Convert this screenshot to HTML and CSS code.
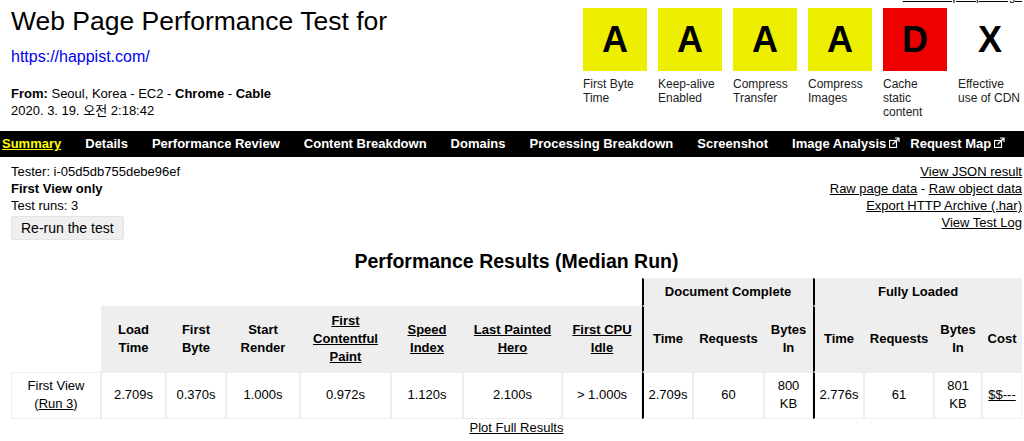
FILE: index.html
```html
<!DOCTYPE html>
<html lang="en">
<head>
<meta charset="utf-8">
<title>WebPageTest Test Result</title>
<link rel="stylesheet" href="styles.css">
</head>
<body>
<div class="header">
  <div class="head-left">
    <h1 class="title">Web Page Performance Test for</h1>
    <a class="url" href="#">https://happist.com/</a>
    <div class="meta">
      <div><b>From:</b> Seoul, Korea - EC2 - <b>Chrome</b> - <b>Cable</b></div>
      <div>2020. 3. 19. 오전 2:18:42</div>
    </div>
  </div>
  <div class="head-right">
    <div class="help"><a href="#">Need Help Improving?</a></div>
    <div class="grades">
      <div class="grade"><div class="box box-a">A</div><div class="label">First Byte Time</div></div>
      <div class="grade"><div class="box box-a">A</div><div class="label">Keep-alive Enabled</div></div>
      <div class="grade"><div class="box box-a">A</div><div class="label">Compress Transfer</div></div>
      <div class="grade"><div class="box box-a">A</div><div class="label">Compress Images</div></div>
      <div class="grade"><div class="box box-d">D</div><div class="label">Cache static content</div></div>
      <div class="grade"><div class="box box-x">X</div><div class="label">Effective use of CDN</div></div>
    </div>
  </div>
</div>

<div class="nav">
  <a class="active" href="#">Summary</a>
  <a href="#">Details</a>
  <a href="#">Performance Review</a>
  <a href="#">Content Breakdown</a>
  <a href="#">Domains</a>
  <a href="#">Processing Breakdown</a>
  <a href="#">Screenshot</a>
  <a href="#">Image Analysis<svg class="ext" viewBox="0 0 11 11" width="11" height="11"><rect x="0.5" y="3.5" width="7" height="7"/><path d="M3.5 7.5 L10 1 M6 1 H10 V5"/></svg></a>
  <a href="#">Request Map<svg class="ext" viewBox="0 0 11 11" width="11" height="11"><rect x="0.5" y="3.5" width="7" height="7"/><path d="M3.5 7.5 L10 1 M6 1 H10 V5"/></svg></a>
</div>

<div class="info">
  <div class="info-left">
    <div>Tester: i-05d5db755debe96ef</div>
    <div class="strong">First View only</div>
    <div>Test runs: 3</div>
    <button class="rerun" type="button">Re-run the test</button>
  </div>
  <div class="info-right">
    <div><a href="#">View JSON result</a></div>
    <div><a href="#">Raw page data</a> - <a href="#">Raw object data</a></div>
    <div><a href="#">Export HTTP Archive (.har)</a></div>
    <div><a href="#">View Test Log</a></div>
  </div>
</div>

<h2 class="results-title">Performance Results (Median Run)</h2>

<table class="results">
  <colgroup>
    <col class="w90"><col class="w65"><col class="w60"><col class="w74"><col class="w91"><col class="w72"><col class="w99"><col class="w80">
    <col class="w51"><col class="w71"><col class="w49">
    <col class="w51"><col class="w70"><col class="w48"><col class="w40">
  </colgroup>
  <tr class="row-group">
    <th class="blank" colspan="8"></th>
    <th class="sep" colspan="3">Document Complete</th>
    <th class="sep" colspan="4">Fully Loaded</th>
  </tr>
  <tr class="row-head">
    <th class="blank"></th>
    <th>Load Time</th>
    <th>First Byte</th>
    <th>Start Render</th>
    <th><a href="#">First Contentful Paint</a></th>
    <th><a href="#">Speed Index</a></th>
    <th><a href="#">Last Painted Hero</a></th>
    <th><a href="#">First CPU Idle</a></th>
    <th class="sep">Time</th>
    <th>Requests</th>
    <th>Bytes In</th>
    <th class="sep">Time</th>
    <th>Requests</th>
    <th>Bytes In</th>
    <th>Cost</th>
  </tr>
  <tr class="row-data">
    <td><span class="run">First View<br>(<a href="#">Run 3</a>)</span></td>
    <td>2.709s</td>
    <td>0.370s</td>
    <td>1.000s</td>
    <td>0.972s</td>
    <td>1.120s</td>
    <td>2.100s</td>
    <td>&gt; 1.000s</td>
    <td class="sep">2.709s</td>
    <td>60</td>
    <td>800 KB</td>
    <td class="sep">2.776s</td>
    <td>61</td>
    <td>801 KB</td>
    <td><a href="#">$$---</a></td>
  </tr>
</table>

<div class="plot"><a href="#">Plot Full Results</a></div>
</body>
</html>
```

FILE: styles.css
```css
body {
  margin: 0;
  font-family: "Liberation Sans", Arial, "Noto Sans CJK KR", sans-serif;
  font-size: 13px;
  color: #000;
  background: #fff;
}

a {
  color: #000;
}

/* ---------- header ---------- */
.header {
  display: flex;
  justify-content: space-between;
  align-items: flex-start;
  padding-left: 11px;
}

.title {
  font-weight: normal;
  font-size: 26.5px;
  line-height: 34px;
  margin: 4px 0 0;
}

.url {
  display: block;
  margin-top: 8px;
  font-size: 16px;
  line-height: 22px;
  color: #0000ee;
  text-decoration: none;
}

.meta {
  margin-top: 17px;
  line-height: 17px;
  font-family: "Liberation Sans", "Noto Sans CJK KR", sans-serif;
}

.head-right {
  margin-top: -11px;
  margin-right: 2px;
}

.help {
  text-align: right;
  font-size: 12px;
  line-height: 15px;
}

.grades {
  display: flex;
  gap: 11px;
  margin-top: 4px;
}

.grade {
  width: 64px;
}

.box {
  height: 63px;
  display: flex;
  align-items: center;
  justify-content: center;
  font-weight: bold;
  font-size: 36px;
}

.box-a { background: #eeee00; }
.box-d { background: #ee0000; }
.box-x { background: #fff; }

.label {
  margin-top: 6px;
  font-size: 12px;
  line-height: 14px;
  color: #222;
}

/* ---------- nav ---------- */
.nav {
  display: flex;
  gap: 24px;
  margin-top: 12px;
  padding-left: 2px;
  height: 26px;
  background: #000;
  font-weight: bold;
  font-size: 13px;
  line-height: 26px;
  white-space: nowrap;
}

.nav a {
  color: #fff;
  text-decoration: none;
}

.nav a.active {
  color: #ffff00;
  text-decoration: underline;
}

.ext {
  margin-left: 3px;
  margin-right: -14px;
  vertical-align: 0;
  fill: none;
  stroke: #fff;
  stroke-width: 1.2;
}

/* ---------- info ---------- */
.info {
  display: flex;
  justify-content: space-between;
  margin: 6px 2px 0 11px;
  line-height: 17px;
}

.strong {
  font-weight: bold;
}

.rerun {
  display: block;
  margin-top: 2px;
  height: 24px;
  padding: 0 9px;
  font-family: "Liberation Sans", Arial, sans-serif;
  font-size: 14px;
  line-height: 22px;
  color: #000;
  background: #efefef;
  border: 1px solid #e4e4e4;
  border-radius: 2px;
}

.info-right {
  text-align: right;
}

/* ---------- results ---------- */
.results-title {
  margin: 9px 2px 0 11px;
  text-align: center;
  font-size: 19.5px;
  font-weight: bold;
  line-height: 24px;
}

.results {
  margin: 5px 0 0 11px;
  width: 1011px;
  table-layout: fixed;
  border-collapse: separate;
  border-spacing: 0;
  font-size: 13px;
  line-height: 18px;
}

.w90 { width: 90px; }
.w65 { width: 65px; }
.w60 { width: 60px; }
.w74 { width: 74px; }
.w91 { width: 91px; }
.w72 { width: 72px; }
.w99 { width: 99px; }
.w80 { width: 80px; }
.w51 { width: 51px; }
.w71 { width: 71px; }
.w49 { width: 49px; }
.w70 { width: 70px; }
.w48 { width: 48px; }
.w40 { width: 40px; }

.results th,
.results td {
  border: 1px solid #eeeeee;
  text-align: center;
  vertical-align: middle;
}

.results th {
  background: #eeeeee;
  font-weight: bold;
  padding: 5px 3px;
}

.results .row-group th {
  padding: 4px 3px;
}

.results th.blank {
  background: transparent;
  border: none;
}

.results td {
  padding: 4px 3px 5px;
  background: #fff;
}

.results .sep {
  border-left: 2px solid #000;
}

.run {
  display: inline-block;
}

.plot {
  margin: 0 2px 0 11px;
  text-align: center;
  line-height: 17px;
}
```
